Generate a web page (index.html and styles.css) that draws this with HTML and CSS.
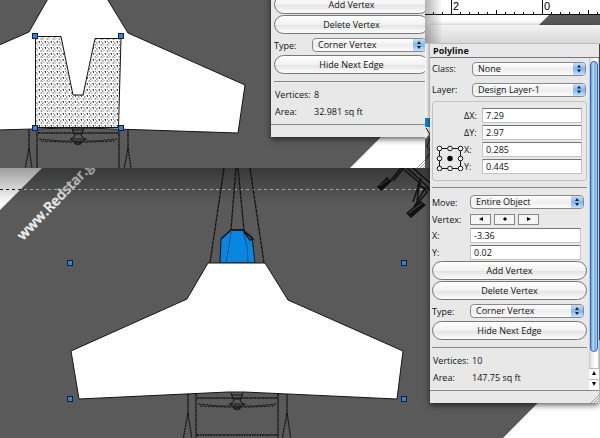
FILE: index.html
```html
<!DOCTYPE html>
<html lang="en">
<head>
<meta charset="utf-8">
<title>Polyline</title>
<link rel="stylesheet" href="styles.css">
</head>
<body>
<main class="stage">
  <svg class="drawing" viewBox="0 0 600 438" preserveAspectRatio="xMinYMin slice" aria-hidden="true">
    <defs>
      <g id="landing-gear" fill="none" stroke="#151515" stroke-width="1">
        <path d="M188 394V415M196 394V440M278 394V440M287 394V415" stroke-width="1.400" stroke-dasharray="2 .5"/>
        <path d="M183 440L188 413L192 440M282 440L287 413L291 440M197 398H277M197 435H277" stroke-width="1.300" stroke-dasharray="2 .6"/>
        <path d="M198 404L220 406H254L276 404M200 406L225 407H250L274 406" stroke-dasharray="3 1"/>
        <path d="M231 393L234 401L230 404L237 410L244 404L240 401L243 393M231 395H243M233 399H241M229 404H246M234 407H240V409H234Z"/>
      </g>
      <g id="grip"><path d="M0 8L8 0M3 8L8 3M6 8L8 6" stroke="#999" fill="none"/></g>
    </defs>
    <rect width="600" height="438" fill="#5a5a5a"/>
    <path d="M0 168H42L0 210Z" fill="#fff"/>
    <path d="M600 340V438H503Z" fill="#fff"/>
    <path d="M425 15H549L425 139Z" fill="#fff"/>
    <text class="mark" transform="translate(23 241) rotate(-46)">www.Redstar.g</text>
    <path d="M0 189.500H24" stroke="#222" stroke-dasharray="3 3"/>
    <path d="M24 189.500H430" stroke="#c4c4c4" stroke-dasharray="3 3"/>
    <g fill="none" stroke="#151515">
      <path d="M224 168L210 263M250 168L264 263M236 168L231 230M238 168L244 230" stroke-width="1.300" stroke-dasharray="4 .6"/>
      <path d="M220 263L221 239L231 230H243L252 237L255 263Z" fill="#0787e2"/>
      <path d="M221 239L231 230H243L253 239L250 240L244 232" stroke-width="1.500"/>
      <path d="M231 232L229 246L226 263M243 231L247 246L248 263" stroke="#0b4f8c"/>
      <path d="M401 168L391 180M403 169L393 181M402 168L421 184M407 168L429 188M413 168L430 183M417 202L419 184L427 192L415 207M417 185L430 190M421 178L413 202M424 190L414 207" stroke-width="1.600"/>
    </g>
    <path d="M377 187L387 177L392 181L381 191ZM406 213L421 201L426 205L411 218Z" fill="#111"/>
    <path d="M380 186L390 178M409 213L422 203" stroke="#555" fill="none"/>
    <path d="M425 118h6v9h-6z" fill="#0787e2"/>
    <path d="M426 128L431 136L427 146L431 152L426 159" stroke="#111" fill="none"/>
    <use href="#landing-gear"/>
    <path d="M208 263H265L288 300L403 351L397 399L244 392H228L79 399L71 351L187 299Z" fill="#fff" stroke="#151515"/>
    <g class="handles">
      <rect x="67.500" y="260.500" width="5" height="5"/><rect x="401.500" y="260.500" width="5" height="5"/>
      <rect x="67.500" y="396.500" width="5" height="5"/><rect x="401.500" y="396.500" width="5" height="5"/>
    </g>
  </svg>

  <div class="ruler">
    <svg class="ruler-marks" viewBox="0 0 175 25" preserveAspectRatio="xMinYMin slice" aria-hidden="true">
      <path d="M0 0H175V25H0Z" fill="#fff"/>
      <path d="M124 15H175V25H114Z" fill="#5a5a5a"/>
      <path d="M0 14.500H175M26.500 0V14M117.500 0V14M71.500 10V14M163.500 10V14M8.500 12V14M17.500 12V14M35.500 12V14M44.500 12V14M53.500 12V14M62.500 12V14M80.500 12V14M89.500 12V14M98.500 12V14M108.500 12V14M126.500 12V14M135.500 12V14M144.500 12V14M154.500 12V14M172.500 12V14" stroke="#111" fill="none"/>
      <text class="ruler-number" x="28" y="10">2</text><text class="ruler-number" x="119" y="10">0</text>
    </svg>
  </div>

  <section class="palette palette-front" aria-label="Object info">
    <div class="title-bar"></div>
    <h1 class="heading">Polyline</h1>
    <div class="palette-body">
      <form class="fields">
        <div class="row row-class"><label for="class">Class:</label><span class="popup"><select id="class"><option>None</option></select></span></div>
        <div class="row row-class"><label for="layer">Layer:</label><span class="popup"><select id="layer"><option>Design Layer-1</option></select></span></div>
        <div class="box">
          <svg class="anchor" viewBox="0 0 28 26" aria-hidden="true">
            <path d="M3.500 3.500H24.500V23.500H3.500Z" fill="none" stroke="#111"/>
            <g fill="#fff" stroke="#111"><circle cx="3.500" cy="3.500" r="2.300"/><circle cx="14" cy="3.500" r="2.300"/><circle cx="24.500" cy="3.500" r="2.300"/><circle cx="3.500" cy="13.500" r="2.300"/><circle cx="24.500" cy="13.500" r="2.300"/><circle cx="3.500" cy="23.500" r="2.300"/><circle cx="14" cy="23.500" r="2.300"/><circle cx="24.500" cy="23.500" r="2.300"/></g>
            <circle cx="14" cy="13.500" r="2.700" fill="#000"/>
          </svg>
          <div class="box-grid">
            <label for="dx">ΔX:</label><input id="dx" value="7.29">
            <label for="dy">ΔY:</label><input id="dy" value="2.97">
            <label for="bx">X:</label><input id="bx" value="0.285">
            <label for="by">Y:</label><input id="by" value="0.445">
          </div>
        </div>
        <hr class="rule">
        <div class="row row-move"><label for="move">Move:</label><span class="popup"><select id="move"><option>Entire Object</option></select></span></div>
        <div class="row row-vertex"><span class="label">Vertex:</span>
          <span class="steps">
            <button type="button" aria-label="Previous"><svg viewBox="0 0 6 6"><path d="M1 3L5 1V5Z"/></svg></button>
            <button type="button" aria-label="Current"><svg viewBox="0 0 6 6"><path d="M3 1L5 3L3 5L1 3Z"/></svg></button>
            <button type="button" aria-label="Next"><svg viewBox="0 0 6 6"><path d="M5 3L1 1V5Z"/></svg></button>
          </span>
        </div>
        <div class="row row-input"><label for="vx">X:</label><input id="vx" value="-3.36"></div>
        <div class="row row-input"><label for="vy">Y:</label><input id="vy" value="0.02"></div>
        <button type="button" class="pill">Add Vertex</button>
        <button type="button" class="pill">Delete Vertex</button>
        <div class="row row-type"><label for="type">Type:</label><span class="popup"><select id="type"><option>Corner Vertex</option></select></span></div>
        <button type="button" class="pill">Hide Next Edge</button>
        <hr class="rule">
        <dl class="stats"><dt>Vertices:</dt><dd>10</dd><dt>Area:</dt><dd>147.75 sq ft</dd></dl>
      </form>
      <div class="scrollbar" aria-hidden="true">
        <div class="track"><div class="thumb"></div></div>
        <svg class="arrows" viewBox="0 0 10 22"><path d="M0 .500H10M0 11.500H10" stroke="#bbb"/><path d="M5 3L7 7H3ZM5 18L3 14H7Z"/></svg>
      </div>
    </div>
    <div class="status"><svg class="grip" viewBox="0 0 8 8" aria-hidden="true"><use href="#grip"/></svg></div>
  </section>

  <section class="inset" aria-label="Detail view">
    <svg class="drawing" viewBox="0 0 425 168" preserveAspectRatio="xMinYMin slice" aria-hidden="true">
      <defs>
        <pattern id="stipple" width="6" height="6" patternUnits="userSpaceOnUse">
          <rect width="6" height="6" fill="#fff"/>
          <path d="M0 1H1.500M3 0L4 1M1 3.500L2 2.500M4.500 3H6M2.500 5.500H4M5 5L5.700 5.700" stroke="#222" stroke-width=".8"/>
        </pattern>
      </defs>
      <rect width="425" height="168" fill="#5a5a5a"/>
      <path d="M425 93V168H350Z" fill="#fff"/>
      <use href="#landing-gear" transform="translate(-159 -265)"/>
      <path d="M49 -3L29 32L-3 46V130L70 128H85L238 133L245 85L128 33L106 -3Z" fill="#fff" stroke="#151515"/>
      <path d="M35.500 36.500H61L73 95H83L95 38.500H121L118.500 127.500H35.500Z" fill="url(#stipple)" stroke="#151515"/>
      <g class="handles">
        <rect x="32.500" y="33.500" width="5" height="5"/><rect x="118.500" y="33.500" width="5" height="5"/>
        <rect x="32.500" y="125.500" width="5" height="5"/><rect x="118.500" y="125.500" width="5" height="5"/>
      </g>
    </svg>
    <div class="palette palette-back">
      <form class="fields">
        <button type="button" class="pill">Add Vertex</button>
        <button type="button" class="pill">Delete Vertex</button>
        <div class="row row-type"><label for="type2">Type:</label><span class="popup"><select id="type2"><option>Corner Vertex</option></select></span></div>
        <button type="button" class="pill">Hide Next Edge</button>
        <hr class="rule">
        <dl class="stats"><dt>Vertices:</dt><dd>8</dd><dt>Area:</dt><dd>32.981 sq ft</dd></dl>
      </form>
      <div class="status"></div>
    </div>
    <svg class="grip" viewBox="0 0 8 8" aria-hidden="true"><use href="#grip"/></svg>
  </section>
</main>
</body>
</html>
```
FILE: styles.css
```css
* { box-sizing: border-box; }
body {
  margin: 0;
  color: #111;
  font: 9px/13px "Open Sans", "Noto Sans", sans-serif;
}
.stage { position: relative; height: 100vh; overflow: hidden; background: #5a5a5a; }
.drawing { display: block; width: 100%; height: 100%; }
.handles { fill: #3c7fd0; stroke: #0b2146; }
.mark { fill: #eee; stroke: #eee; stroke-width: .4; font: 600 14px "Open Sans", sans-serif; }

.ruler { position: absolute; top: 0; right: 0; width: 175px; }
.ruler-marks { display: block; width: 100%; }
.ruler-number { font: 11px "Liberation Sans", sans-serif; }
.ruler::after {
  content: "";
  position: absolute;
  inset: 0;
  background: linear-gradient(90deg, rgba(0, 0, 0, .3), transparent 10%);
}

/* Floating palettes */
.palette { position: absolute; background: #e8e8e8; box-shadow: 0 2px 6px rgba(0, 0, 0, .65); }
.palette-front { top: 25px; right: 1px; width: 169px; }
.palette-back { top: -5px; left: 271px; width: 170px; }
.title-bar {
  height: 19px;
  margin: 0 -1px 0 -5px;
  border-bottom: 1px solid #bbb;
  background: linear-gradient(90deg, rgba(0, 0, 0, .3), transparent 10%), linear-gradient(#f3f3f3, #d8d8d8);
}
.heading { margin: 0; padding: 0 3px; border-bottom: 1px solid #777; font-size: 9px; line-height: 13px; }
.palette-body { display: flex; }
.fields { display: flex; flex: 1; flex-direction: column; min-width: 0; padding: 0 2px; }
.palette-back .fields { padding: 0 12px 0 3px; }

.row { display: grid; grid-template-columns: 38px 1fr; align-items: center; padding-right: 3px; }
.row-class { grid-template-columns: 40px 1fr; height: 21px; padding-right: 1px; }
.row-move { height: 18px; margin-top: 5px; }
.row-vertex { height: 16px; }
.row-input { height: 17px; padding-right: 6px; }
.row-type { height: 20px; }

.popup { position: relative; display: block; height: 14px; }
.popup::before {
  content: "";
  position: absolute;
  top: 1px;
  right: 1px;
  width: 12px;
  height: 12px;
  border-radius: 0 3px 3px 0;
  background: linear-gradient(#c9def6, #83b6ec 50%, #c0e4ff);
}
.popup::after {
  content: "";
  position: absolute;
  top: 3px;
  right: 5px;
  width: 4px;
  height: 8px;
  background: #10233f;
  clip-path: polygon(50% 0, 100% 38%, 0 38%, 0 62%, 100% 62%, 50% 100%, 0 62%, 0 38%);
}
select {
  display: block;
  width: 100%;
  height: 14px;
  padding: 0 14px 0 5px;
  border: 1px solid #888;
  border-radius: 4px;
  background: linear-gradient(#fff, #eee 50%, #fafafa);
  color: inherit;
  font: inherit;
  line-height: 12px;
  appearance: none;
}
input {
  width: 100%;
  min-width: 0;
  height: 15px;
  padding: 0 3px;
  border: 1px solid #c4c4c4;
  border-top-color: #777;
  background: #fff;
  color: inherit;
  font: inherit;
}
.box {
  display: flex;
  align-items: flex-end;
  margin-top: 1px;
  padding: 6px 4px 6px 3px;
  border: 1px solid #c2c2c2;
  border-radius: 3px;
}
.anchor { flex: none; width: 28px; margin-bottom: 3px; }
.box-grid {
  display: grid;
  flex: 1;
  grid-template-columns: 15px 1fr;
  gap: 2px 3px;
  align-items: center;
}
.box-grid label { white-space: nowrap; }
.rule { width: 100%; margin: 6px 0 0; border: 0; border-top: 1px solid #888; }

.steps { display: flex; gap: 3px; }
.steps button {
  display: grid;
  width: 21px;
  height: 11px;
  padding: 0;
  border: 1px solid #888;
  background: #f5f5f5;
  place-items: center;
}
.steps svg { width: 6px; height: 6px; }
.pill {
  height: 19px;
  margin-bottom: 1px;
  padding: 0;
  border: 1px solid #777;
  border-radius: 10px;
  background: linear-gradient(#fff, #f2f2f2 50%, #e4e4e4 55%, #fcfcfc);
  color: inherit;
  font: inherit;
}
.rule + .stats { margin-top: 6px; }
.stats {
  display: grid;
  grid-template-columns: 39px 1fr;
  row-gap: 4px;
  margin: 0 0 6px;
  padding-left: 1px;
}
.stats dd { margin: 0; }
.status { display: flex; justify-content: flex-end; align-items: flex-end; height: 13px; border-top: 1px solid #888; }
.grip { width: 8px; height: 8px; }

.scrollbar { display: flex; flex-direction: column; width: 10px; }
.track { flex: 1; padding: 3px 0 16px; border: 1px solid #ccc; border-width: 0 1px; background: linear-gradient(90deg, #ddd, #fff 60%); }
.thumb {
  height: 100%;
  border: 1px solid #3569bd;
  border-radius: 4px;
  background: linear-gradient(90deg, #5e9aeb, #c3e2ff 40%, #66a6f2 65%, #a4d9ff);
}
.arrows { display: block; width: 10px; background: #fff; }

.inset {
  position: absolute;
  top: 0;
  left: 0;
  width: 425px;
  height: 168px;
  overflow: hidden;
}
.inset > .grip { position: absolute; right: 0; bottom: 0; }
.stage::after {
  content: "";
  position: absolute;
  top: 168px;
  left: 0;
  width: 430px;
  height: 36px;
  background: linear-gradient(rgba(0, 0, 0, .38), transparent);
}
```
